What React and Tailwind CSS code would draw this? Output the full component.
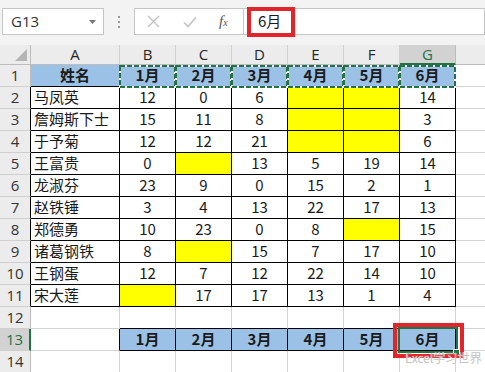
import clsx from 'clsx';

const Y = 'Y';
const rows = [
  ['马凤英', 12, 0, 6, Y, Y, 14],
  ['詹姆斯下士', 15, 11, 8, Y, Y, 3],
  ['于予菊', 12, 12, 21, Y, Y, 6],
  ['王富贵', 0, Y, 13, 5, 19, 14],
  ['龙淑芬', 23, 9, 0, 15, 2, 1],
  ['赵铁锤', 3, 4, 13, 22, 17, 13],
  ['郑德勇', 10, 23, 0, 8, Y, 15],
  ['诸葛钢铁', 8, Y, 15, 7, 17, 10],
  ['王钢蛋', 12, 7, 12, 22, 14, 10],
  ['宋大莲', Y, 17, 17, 13, 1, 4],
];
const months = ['1月', '2月', '3月', '4月', '5月', '6月'];
const letters = ['A', 'B', 'C', 'D', 'E', 'F', 'G'];

const R_BLACK = 'border-r border-r-black';
const R_GRAY = 'border-r border-r-[#d4d4d4]';
const B_BLACK = 'border-b border-b-black';
const B_GRAY = 'border-b border-b-[#d4d4d4]';

function Cell({ r, b, className, children }) {
  return <div className={clsx('flex h-[22px] items-center', r, b, className)}>{children}</div>;
}

function RowHead({ n, dark, selected }) {
  if (selected) {
    return (
      <div className="flex h-[22px] items-center justify-center border-b border-b-[#cfcfcf] border-r-2 border-r-[#217346] bg-[#d2d2d2] font-['Open_Sans',sans-serif] text-[15px] text-[#217346]">
        {n}
      </div>
    );
  }
  return (
    <div
      className={clsx(
        "flex h-[22px] items-center justify-center border-b border-b-[#cfcfcf] bg-[#ececec] font-['Open_Sans',sans-serif] text-[15px] text-[#333]",
        dark ? R_BLACK : 'border-r border-r-[#bdbdbd]'
      )}
    >
      {n}
    </div>
  );
}

// copy-mode marching ants around a cell
function Ants() {
  return (
    <svg className="pointer-events-none absolute -left-px top-0 h-[23px] w-[57px]" viewBox="0 0 57 23">
      <rect x="1" y="1" width="55" height="21" fill="none" stroke="#ffffff" strokeWidth="2" />
      <rect x="1" y="1" width="55" height="21" fill="none" stroke="#217346" strokeWidth="2" strokeDasharray="5 2" />
    </svg>
  );
}

function FormulaBar() {
  return (
    <div className="flex h-[45px] items-start bg-[#f3f3f3] pt-[8px]">
      <div className="ml-[2px] flex h-[27px] w-[102px] items-center justify-between border border-[#c6c6c6] bg-white pl-[8px] pr-[7px]">
        <span className="font-['Open_Sans',sans-serif] text-[15px] text-[#333]">G13</span>
        <svg width="7" height="4" viewBox="0 0 7 4">
          <polygon points="0,0 7,0 3.5,4" fill="#777" />
        </svg>
      </div>
      <div className="flex h-[27px] w-[30px] flex-col items-center justify-center gap-[3px]">
        <span className="h-[2px] w-[2px] bg-[#9a9a9a]" />
        <span className="h-[2px] w-[2px] bg-[#9a9a9a]" />
        <span className="h-[2px] w-[2px] bg-[#9a9a9a]" />
      </div>
      <div className="flex h-[27px] w-[110px] items-center border border-[#c6c6c6] bg-white pl-[12px]">
        <svg width="13" height="13" viewBox="0 0 13 13">
          <path d="M1 1L12 12M12 1L1 12" stroke="#c2c2c2" strokeWidth="1.4" />
        </svg>
        <svg className="ml-[23px]" width="14" height="12" viewBox="0 0 14 12">
          <path d="M1 6.5L5 10.5L13 1.5" stroke="#c2c2c2" strokeWidth="1.6" fill="none" />
        </svg>
        <span className="ml-[22px] font-['Liberation_Serif',serif] text-[15px] italic text-[#555]">
          f<span className="text-[10px]">x</span>
        </span>
      </div>
      <div className="relative flex h-[27px] flex-1 items-center border-y border-r border-[#c6c6c6] bg-white pl-[14px] text-[15px] text-[#1a1a1a]">
        6月
        <div className="absolute left-[3px] top-[-2px] h-[30px] w-[48px] border-4 border-[#e3242b]" />
      </div>
    </div>
  );
}

function Sheet() {
  const cells = [];

  // column header row
  cells.push(
    <div key="corner" className="relative h-[20px] border-b border-r border-[#bdbdbd] bg-[#ececec]">
      <svg className="absolute bottom-[3px] right-[3px]" width="12" height="12" viewBox="0 0 12 12">
        <polygon points="12,0 12,12 0,12" fill="#b5b5b5" />
      </svg>
    </div>
  );
  letters.forEach((l) => {
    const sel = l === 'G';
    cells.push(
      <div
        key={'h' + l}
        className={clsx(
          "flex h-[20px] items-center justify-center border-r font-['Open_Sans',sans-serif] text-[15px]",
          sel
            ? 'border-b-2 border-b-[#217346] border-r-[#bdbdbd] bg-[#d2d2d2] text-[#217346]'
            : 'border-b border-b-[#bdbdbd] border-r-[#d0d0d0] bg-[#ececec] text-[#262626]'
        )}
      >
        {l}
      </div>
    );
  });
  cells.push(<div key="hH" className="h-[20px] border-b border-b-[#bdbdbd] bg-[#ececec]" />);

  // row 1
  cells.push(<RowHead key="r1" n={1} />);
  cells.push(
    <Cell key="a1" r={R_BLACK} b={B_BLACK} className="justify-center bg-[#9bc2e6] text-[15px] font-bold">
      姓名
    </Cell>
  );
  months.forEach((m) => {
    cells.push(
      <Cell key={'1' + m} r={R_BLACK} b={B_BLACK} className="relative justify-center bg-[#9bc2e6] text-[15px] font-bold">
        {m}
        <Ants />
      </Cell>
    );
  });
  cells.push(<Cell key="h1" b={B_GRAY} />);

  // rows 2-11
  rows.forEach((row, i) => {
    cells.push(<RowHead key={'rh' + i} n={i + 2} dark />);
    row.forEach((v, j) => {
      if (j === 0) {
        cells.push(
          <Cell key={i + '-' + j} r={R_BLACK} b={B_BLACK} className="pl-[3px] text-[15px]">
            {v}
          </Cell>
        );
      } else if (v === Y) {
        cells.push(<Cell key={i + '-' + j} r={R_BLACK} b={B_BLACK} className="bg-[#ffff00]" />);
      } else {
        cells.push(
          <Cell key={i + '-' + j} r={R_BLACK} b={B_BLACK} className="justify-center text-[15px]">
            {v}
          </Cell>
        );
      }
    });
    cells.push(<Cell key={'h' + i} b={B_GRAY} />);
  });

  // row 12
  cells.push(<RowHead key="r12" n={12} />);
  cells.push(<Cell key="a12" r={R_GRAY} b={B_GRAY} />);
  months.forEach((m) => cells.push(<Cell key={'12' + m} r={R_GRAY} b={B_BLACK} />));
  cells.push(<Cell key="h12" b={B_GRAY} />);

  // row 13
  cells.push(<RowHead key="r13" n={13} selected />);
  cells.push(<Cell key="a13" r={R_BLACK} b={B_GRAY} />);
  months.forEach((m, k) => {
    const active = k === 5;
    cells.push(
      <Cell key={'13' + m} r={R_BLACK} b={B_BLACK} className="relative justify-center bg-[#9bc2e6] text-[15px] font-bold">
        {m}
        {active && (
          <>
            <div className="pointer-events-none absolute -bottom-[3px] -left-[2px] -right-[3px] -top-[2px] border-2 border-[#217346]" />
            <div className="pointer-events-none absolute -bottom-[6px] -right-[5px] h-[7px] w-[7px] border border-white bg-[#217346]" />
            <div className="pointer-events-none absolute -bottom-[8px] -left-[7px] -right-[9px] -top-[6px] border-4 border-[#e3242b]" />
          </>
        )}
      </Cell>
    );
  });
  cells.push(<Cell key="h13" b={B_GRAY} />);

  // row 14
  cells.push(<RowHead key="r14" n={14} />);
  letters.forEach((l) => cells.push(<Cell key={'14' + l} r={R_GRAY} b={B_GRAY} />));
  cells.push(<Cell key="h14" b={B_GRAY} />);

  return <div className="grid grid-cols-[31px_89px_56px_56px_56px_56px_56px_56px_1fr]">{cells}</div>;
}

export default function App() {
  return (
    <div className="relative h-[372px] w-[485px] overflow-hidden bg-white font-['Noto_Sans_CJK_SC',sans-serif] text-[#1a1a1a]">
      <FormulaBar />
      <Sheet />
      <span className="pointer-events-none absolute left-[405px] top-[352px] whitespace-nowrap text-[12.5px] leading-none tracking-tight text-[#c4c4c4] [text-shadow:0_0_1px_#ffffff]">
        Excel学习世界
      </span>
    </div>
  );
}
